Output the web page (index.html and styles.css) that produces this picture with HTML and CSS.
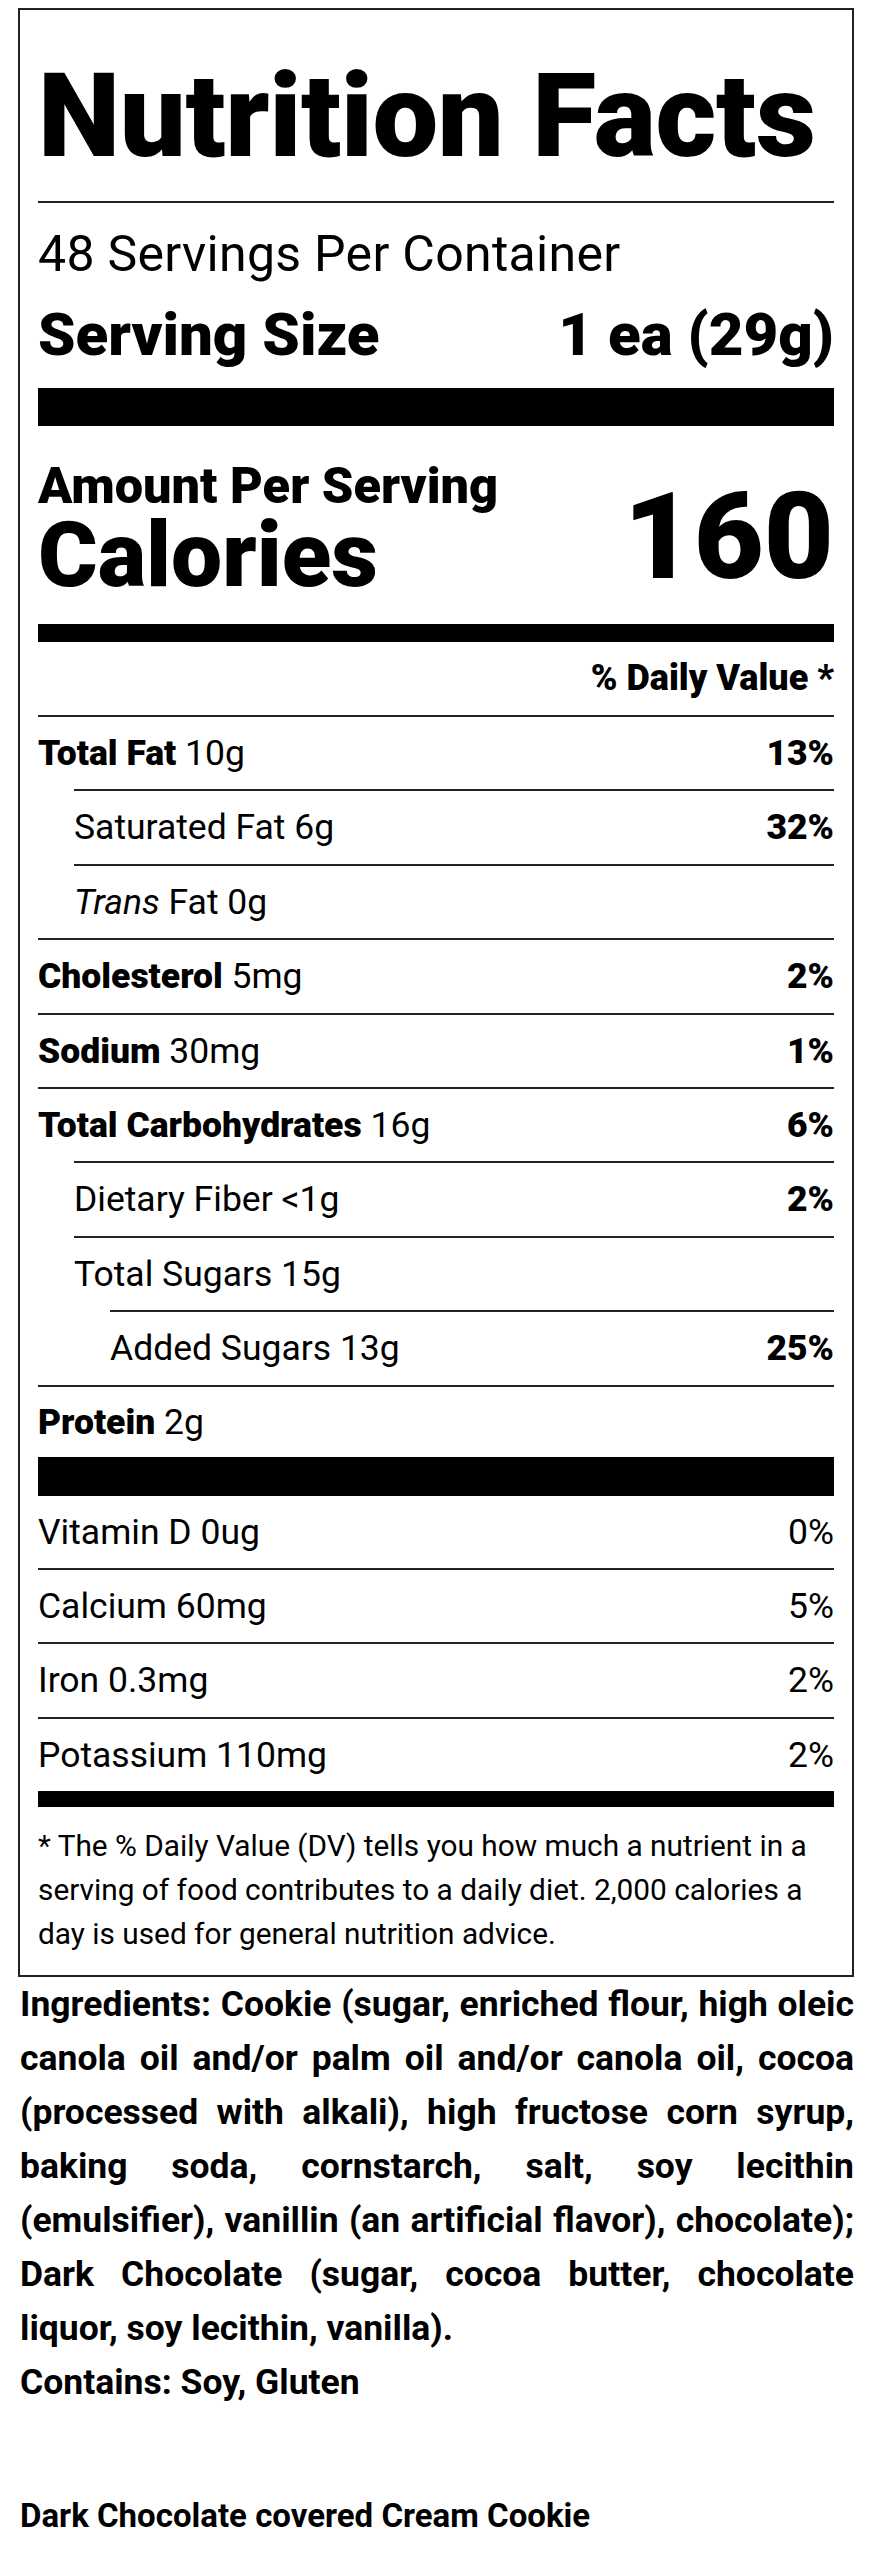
FILE: index.html
```html
<!DOCTYPE html>
<html lang="en">
<head>
<meta charset="utf-8">
<title>Nutrition Facts</title>
<link rel="stylesheet" href="styles.css">
</head>
<body>
<div class="page">
  <section class="label">
    <h1 class="title">Nutrition Facts</h1>
    <div class="rule"></div>
    <p class="servings">48 Servings Per Container</p>
    <div class="serving-size"><span>Serving Size</span><span>1 ea (29g)</span></div>
    <div class="bar bar-thick"></div>
    <div class="calories">
      <div class="cal-left">
        <div class="amount">Amount Per Serving</div>
        <div class="cal-label">Calories</div>
      </div>
      <div class="cal-value">160</div>
    </div>
    <div class="bar bar-medium"></div>
    <div class="dv-head">% Daily Value *</div>
    <div class="row"><span><b>Total Fat</b> 10g</span><b>13%</b></div>
    <div class="row sub"><span>Saturated Fat 6g</span><b>32%</b></div>
    <div class="row sub"><span><i>Trans</i> Fat 0g</span></div>
    <div class="row"><span><b>Cholesterol</b> 5mg</span><b>2%</b></div>
    <div class="row"><span><b>Sodium</b> 30mg</span><b>1%</b></div>
    <div class="row"><span><b>Total Carbohydrates</b> 16g</span><b>6%</b></div>
    <div class="row sub"><span>Dietary Fiber &lt;1g</span><b>2%</b></div>
    <div class="row sub"><span>Total Sugars 15g</span></div>
    <div class="row subsub"><span>Added Sugars 13g</span><b>25%</b></div>
    <div class="row protein"><span><b>Protein</b> 2g</span></div>
    <div class="bar bar-thick bar-vit"></div>
    <div class="row first"><span>Vitamin D 0ug</span><span>0%</span></div>
    <div class="row"><span>Calcium 60mg</span><span>5%</span></div>
    <div class="row"><span>Iron 0.3mg</span><span>2%</span></div>
    <div class="row"><span>Potassium 110mg</span><span>2%</span></div>
    <div class="bar bar-medium bar-end"></div>
    <p class="footnote">* The % Daily Value (DV) tells you how much a nutrient in a serving of food contributes to a daily diet. 2,000 calories a day is used for general nutrition advice.</p>
  </section>
  <p class="ingredients">Ingredients: Cookie (sugar, enriched flour, high oleic canola oil and/or palm oil and/or canola oil, cocoa (processed with alkali), high fructose corn syrup, baking soda, cornstarch, salt, soy lecithin (emulsifier), vanillin (an artificial flavor), chocolate); Dark Chocolate (sugar, cocoa butter, chocolate liquor, soy lecithin, vanilla).</p>
  <p class="contains">Contains: Soy, Gluten</p>
  <p class="product">Dark Chocolate covered Cream Cookie</p>
</div>
</body>
</html>
```

FILE: styles.css
```css
html, body {
  margin: 0;
  padding: 0;
  background: #fff;
}

body {
  font-family: Roboto, "Liberation Sans", sans-serif;
  color: #000;
}

.page {
  padding: 8px 18px 0;
}

.label {
  border: 2px solid #222;
  padding: 48px 18px 19px;
}

.title {
  margin: 0;
  font-size: 117px;
  line-height: 117px;
  font-weight: 900;
  letter-spacing: -0.4px;
}

.rule {
  height: 2px;
  background: #222;
  margin-top: 26px;
}

.servings {
  margin: 23px 0 0;
  font-size: 50px;
  line-height: 56px;
  font-weight: 400;
  letter-spacing: 0.3px;
}

.serving-size {
  display: flex;
  justify-content: space-between;
  margin-top: 19px;
  font-size: 60px;
  line-height: 68px;
  font-weight: 900;
}

.bar {
  background: #000;
}

.bar-thick {
  height: 38px;
  margin-top: 19px;
}

.calories {
  display: flex;
  justify-content: space-between;
  align-items: flex-end;
  margin-top: 34px;
}

.amount {
  font-size: 50.5px;
  line-height: 52px;
  font-weight: 900;
}

.cal-label {
  font-size: 91px;
  line-height: 86px;
  font-weight: 900;
}

.cal-value {
  font-size: 121px;
  line-height: 121px;
  font-weight: 900;
}

.bar-medium {
  height: 18px;
  margin-top: 26px;
}

.dv-head {
  text-align: right;
  font-size: 36px;
  line-height: 73px;
  font-weight: 900;
}

.row {
  display: flex;
  justify-content: space-between;
  border-top: 2px solid #222;
  font-size: 35.5px;
  line-height: 72.4px;
  font-weight: 400;
}

.row b {
  font-weight: 900;
}

.row.sub {
  margin-left: 36px;
}

.row.subsub {
  margin-left: 72px;
}

.row.protein {
  line-height: 70px;
}

.row.first {
  border-top: none;
}

.bar-vit {
  height: 39px;
  margin-top: 0;
}

.bar-end {
  height: 16px;
  margin-top: 0;
}

.footnote {
  margin: 17px 0 0;
  font-size: 29.8px;
  line-height: 44px;
}

.ingredients,
.contains,
.product {
  margin: 0;
  padding: 0 0 0 2px;
  font-size: 35.5px;
  line-height: 54px;
  font-weight: 700;
}

.ingredients {
  text-align: justify;
}

.product {
  margin-top: 80px;
  font-size: 33px;
}
```
